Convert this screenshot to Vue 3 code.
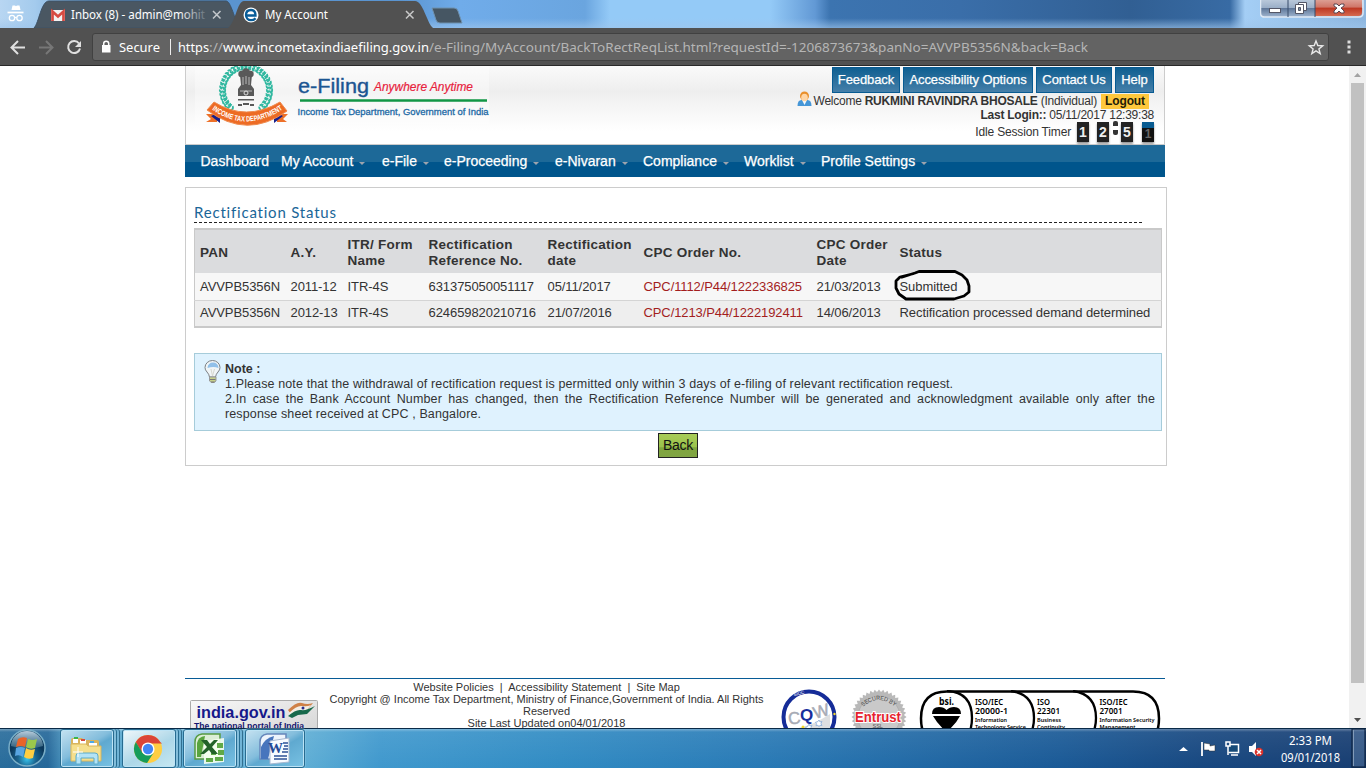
<script setup>
const headerLinks = [
  { label: 'Feedback', w: 68 },
  { label: 'Accessibility Options', w: 130 },
  { label: 'Contact Us', w: 76 },
  { label: 'Help', w: 39 },
]
const nav = [
  { label: 'Dashboard', w: 80.5 },
  { label: 'My Account', w: 101, menu: true },
  { label: 'e-File', w: 62, menu: true },
  { label: 'e-Proceeding', w: 111, menu: true },
  { label: 'e-Nivaran', w: 88, menu: true },
  { label: 'Compliance', w: 101, menu: true },
  { label: 'Worklist', w: 77, menu: true },
  { label: 'Profile Settings', w: 115, menu: true },
]
const columns = ['PAN', 'A.Y.', 'ITR/ Form Name', 'Rectification Reference No.', 'Rectification date', 'CPC Order No.', 'CPC Order Date', 'Status']
const rows = [
  ['AVVPB5356N', '2011-12', 'ITR-4S', '631375050051117', '05/11/2017', 'CPC/1112/P44/1222336825', '21/03/2013', 'Submitted'],
  ['AVVPB5356N', '2012-13', 'ITR-4S', '624659820210716', '21/07/2016', 'CPC/1213/P44/1222192411', '14/06/2013', 'Rectification processed demand determined'],
]
const wreath = Array.from({ length: 30 }, (_, i) => {
  const a = ((i * 9.5 - 228) * Math.PI) / 180
  return { x: 61 + 23.5 * Math.cos(a), y: 24 + 23.5 * Math.sin(a) }
})
const seal = Array.from({ length: 80 }, (_, i) => {
  const a = (i * Math.PI) / 40
  const r = i % 2 ? 25 : 27.5
  return `${(28 + r * Math.cos(a)).toFixed(1)},${(28 + r * Math.sin(a)).toFixed(1)}`
}).join(' ')
</script>

<template>
  <div class="screen">
    <div class="tabstrip">
      <svg class="tabs" width="480" height="28" viewBox="0 0 480 28">
        <defs>
          <linearGradient id="fade" x1="0" x2="1"><stop offset=".8" stop-color="#fff" /><stop offset="1" stop-color="#fff" stop-opacity=".15" /></linearGradient>
        </defs>
        <g fill="none" stroke="#fff" stroke-width="1.3">
          <path d="M12.500 5.500h2.500l1 .7 1-.7h2.500l1 4.500h-9z" fill="#fff" stroke="none" />
          <path d="M7.500 12.500h16" stroke-width="1.700" />
          <circle cx="12" cy="18" r="2.700" /><circle cx="19.500" cy="18" r="2.700" /><path d="M14.700 17.500h2" />
        </g>
        <path d="M34 28C39 23 41 1 49 1H226C231 1 234 19 240 28Z" fill="#4a5762" stroke="#3d5266" />
        <g>
          <rect x="51" y="10" width="14" height="11" fill="#f2f2f2" />
          <path d="M52.500 21V11.500L58 16.500l5.500-5V21" fill="none" stroke="#d64b42" stroke-width="2.700" />
        </g>
        <text class="ui" x="71" y="19" textLength="134" lengthAdjust="spacingAndGlyphs" fill="url(#fade)">Inbox (8) - admin@mohit</text>
        <path d="M213 11l7.500 7.500M220.500 11l-7.500 7.500" stroke="#c4c8cc" stroke-width="1.500" />
        <path d="M228 28C236 22 237 1 244 1H415C423 1 427 23 433 28Z" fill="#515151" />
        <g>
          <circle cx="251" cy="15" r="7.500" fill="#fff" />
          <path d="M246.500 15.500h9c0-4-2-5.500-4.500-5.500-3 0-5 2-5 5s2 5.200 5 5.200c2 0 3.500-.7 4.500-2" fill="none" stroke="#075c98" stroke-width="2.300" />
        </g>
        <text class="ui" x="265" y="19" textLength="63" lengthAdjust="spacingAndGlyphs" fill="#fff">My Account</text>
        <path d="M406 11l7.500 7.500M413.500 11l-7.500 7.500" stroke="#c9c9c9" stroke-width="1.500" />
        <path d="M432 8h22q3 0 4 3l4 12h-22q-3 0-4-3z" fill="#465663" stroke="#6f91ae" />
      </svg>
      <div class="wincontrols">
        <svg width="105" height="18" viewBox="0 0 105 18">
          <defs>
            <linearGradient id="wg" x2="0" y2="1"><stop offset="0" stop-color="#b9c8da" /><stop offset=".45" stop-color="#9bafc8" /><stop offset=".5" stop-color="#60789a" /><stop offset="1" stop-color="#9fb4cf" /></linearGradient>
            <linearGradient id="wr" x2="0" y2="1"><stop offset="0" stop-color="#dc9e93" /><stop offset=".45" stop-color="#cf7567" /><stop offset=".5" stop-color="#bd3722" /><stop offset="1" stop-color="#d56a50" /></linearGradient>
          </defs>
          <path d="M.5 0V13q0 4 4 4H99q4 0 4-4V0" fill="url(#wg)" stroke="#dfe9f5" stroke-width="1.500" />
          <path d="M55 0h47V12q0 4-4 4H55z" fill="url(#wr)" />
          <path d="M28 0v17M55 0v17" stroke="#394d6a" />
          <rect x="9.500" y="8.500" width="11" height="4" fill="#fff" stroke="#535666" />
          <path d="M38.500 2.500h8v8h-8z" fill="#fff" stroke="#535666" /><path d="M35.500 4.500h8v9h-8z" fill="#fff" stroke="#535666" /><path d="M38.500 7.500h2v3h-2z" fill="#8193a8" stroke="#535666" />
          <path d="M74 4h3l2 2 2-2h3v2l-3 2 3 3v2h-3l-2-2-2 2h-3v-2l3-3-3-2z" fill="#fff" stroke="#5a4650" />
        </svg>
      </div>
    </div>

    <div class="toolbar">
      <svg class="navicons" width="92" height="38" viewBox="0 28 92 38">
        <g fill="none" stroke-width="2">
          <path d="M25 47.500H12M18 41l-6.500 6.500L18 54" stroke="#e0e0e0" />
          <path d="M39 47.500h13M46 41l6.500 6.500L46 54" stroke="#777" />
          <path d="M79 43.500a6 6 0 1 0 1 5" stroke="#e0e0e0" /><path d="M81 41v6h-6z" fill="#e0e0e0" />
        </g>
      </svg>
      <div class="omnibox">
        <svg width="1236" height="28" viewBox="92 33 1236 28">
          <rect x="102" y="45" width="8.500" height="7.500" fill="#fff" /><path d="M103.700 46v-2.500q0-2.300 2.500-2.300t2.500 2.300V46" fill="none" stroke="#fff" stroke-width="1.500" />
          <g class="ui">
            <text x="119" y="52" fill="#fff" textLength="41" lengthAdjust="spacingAndGlyphs">Secure</text>
            <text x="178" y="52" fill="#fff" textLength="31" lengthAdjust="spacingAndGlyphs">https</text>
            <text x="209" y="52" fill="#b5b5b5" textLength="14" lengthAdjust="spacingAndGlyphs">://</text>
            <text x="223" y="52" fill="#fff" textLength="206" lengthAdjust="spacingAndGlyphs">www.incometaxindiaefiling.gov.in</text>
            <text x="429" y="52" fill="#b5b5b5" textLength="659" lengthAdjust="spacingAndGlyphs">/e-Filing/MyAccount/BackToRectReqList.html?requestId=-1206873673&amp;panNo=AVVPB5356N&amp;back=Back</text>
          </g>
          <path d="M170.500 39v16" stroke="#eee" />
          <path d="M1316 41l1.800 4.500 4.900.3-3.800 3.100 1.300 4.700-4.200-2.700-4.200 2.700 1.300-4.700-3.800-3.100 4.900-.3z" fill="none" stroke="#e8e8e8" stroke-width="1.400" />
        </svg>
      </div>
      <svg class="dots" width="6" height="16" viewBox="0 0 6 16"><path d="M1.500 1.500h3v3h-3zM1.500 6.500h3v3h-3zM1.500 11.500h3v3h-3z" fill="#ddd" /></svg>
    </div>

    <div class="viewport">
      <main class="page">
        <header class="head">
          <svg class="logo" width="310" height="62" viewBox="0 0 310 62">
            <rect x="10" width="294" height="58" fill="#fff" opacity=".35" />
            <g fill="none" stroke="#31b8a0" stroke-width="1.800">
              <circle v-for="(d, i) in wreath" :key="i" :cx="d.x" :cy="d.y" r="2.700" stroke-dasharray="4 1" />
            </g>
            <g fill="#595959">
              <circle cx="61" cy="6.500" r="4.200" /><circle cx="56.500" cy="8" r="3.200" /><circle cx="65.500" cy="8" r="3.200" />
              <path d="M55 9h12l-1 10 3 4v7H53v-7l3-4z" />
              <path d="M53 33h16v1.500H53zM53 38h4v2h-4zM58 37h6v2h-6zM65 38h4v2h-4z" />
            </g>
            <path d="M58 11v8M61 10v8M64 11v8M55 25h12" stroke="#bbb" />
            <circle cx="61" cy="27" r="2" fill="none" stroke="#ddd" />
            <path d="M21 48h11v8H21l5-3zM103 48H92v8h10l-4-3z" fill="#ed7028" />
            <path d="M26 50l9 7V46zM98 50l-9 7V46z" fill="#16208c" />
            <path d="M22 44l7-8Q61 56 95 36l7 9Q62 74 22 44z" fill="#ed6b24" stroke="#ef8a4e" />
            <path id="ribbon" d="M27 43.500Q61 68 99 42.500" fill="none" />
            <text font-size="7.500" font-weight="700" fill="#fff" class="sans"><textPath href="#ribbon" textLength="76" lengthAdjust="spacingAndGlyphs">INCOME TAX DEPARTMENT</textPath></text>
            <text class="sans" x="113" y="27" font-size="21" fill="#1b5592" stroke="#1b5592" stroke-width=".4" textLength="71" lengthAdjust="spacingAndGlyphs">e-Filing</text>
            <text class="sans" x="189" y="25" font-size="13" font-style="italic" fill="#e8213c" stroke="#e8213c" stroke-width=".2" textLength="99" lengthAdjust="spacingAndGlyphs">Anywhere Anytime</text>
            <path d="M115 34.500h187" stroke="#119645" stroke-width="2.300" />
            <text class="sans" x="112.500" y="48.500" font-size="9.700" fill="#2169a5" stroke="#2169a5" stroke-width=".3" textLength="191" lengthAdjust="spacingAndGlyphs">Income Tax Department, Government of India</text>
          </svg>
          <div class="user">
            <div class="links"><a v-for="l in headerLinks" :key="l.label" :style="{ width: l.w + 'px' }">{{ l.label }}</a></div>
            <div class="line welcome">
              <svg width="15" height="16" viewBox="0 0 15 16"><path d="M.5 15q0-6 4-6h6q4 0 4 6z" fill="#4596d7" /><path d="M5 9h5l-2.500 5z" fill="#f5f8fa" /><circle cx="7.500" cy="5" r="4.500" fill="#e98f2b" /><ellipse cx="7.500" cy="6.500" rx="3.300" ry="3.800" fill="#ffd6a6" /></svg>
              <span class="who">Welcome <b class="name">RUKMINI RAVINDRA BHOSALE</b> <span class="kind">(Individual)</span></span><b class="logout">Logout</b>
            </div>
            <div class="line login"><b>Last Login::</b>&nbsp;05/11/2017 12:39:38</div>
            <div class="line timer"><span>Idle Session Timer</span><i>1</i><i>2</i><em></em><i>5</i><i class="flip">1</i></div>
          </div>
        </header>

        <nav class="menu">
          <a v-for="n in nav" :key="n.label" :style="{ width: n.w + 'px' }">{{ n.label }}<s v-if="n.menu"></s></a>
        </nav>

        <section class="panel">
          <h1><svg width="150" height="20" viewBox="0 0 150 20"><text x="0" y="15" textLength="142" lengthAdjust="spacing">Rectification Status</text></svg></h1>
          <table>
            <colgroup><col class="c1"><col class="c2"><col class="c3"><col class="c4"><col class="c5"><col class="c6"><col class="c7"><col></colgroup>
            <thead><tr><th v-for="c in columns" :key="c">{{ c }}</th></tr></thead>
            <tbody>
              <tr v-for="(r, i) in rows" :key="i">
                <td v-for="(c, j) in r" :key="j" :class="{ order: j === 5, digits: j === 3, date: j === 1 || j === 4 || j === 6 }">
                  <span class="cell">{{ c }}<svg v-if="i === 0 && j === 7" class="ring" width="80" height="36" viewBox="0 0 80 36"><path d="M8 8.500L22 4 26 2.500H62L69 6l5 5 2 6v6l-5 4-10 3H13L6 25 3 19V12L7 8l14-3.500" fill="none" stroke="#000" stroke-width="2.800" stroke-linejoin="round" /></svg></span>
                </td>
              </tr>
            </tbody>
          </table>
          <div class="note">
            <svg width="18" height="24" viewBox="0 0 18 24"><path d="M5.500 17Q5 14 3 12Q1 10 1 7.500A7.500 7 0 0 1 16 7.500Q16 10 14 12T11.500 17z" fill="#f0f5f7" stroke="#7c8084" /><path d="M3.500 8Q4 2.500 9 2.500t5.500 5.500q-5-2-11 0z" fill="#91c0e9" /><path d="M7 9l1.500 7 2-7" stroke="#d8d8cf" fill="none" /><path d="M5.500 17h6.500v4l-2 1.500H7.500l-2-1.500z" fill="#c7d18a" stroke="#999" /><path d="M6 19.500h5.500M7 22h3.500" stroke="#777" /></svg>
            <div><b>Note :</b><p>1.Please note that the withdrawal of rectification request is permitted only within 3 days of e-filing of relevant rectification request.</p><p class="second">2.In case the Bank Account Number has changed, then the Rectification Reference Number will be generated and acknowledgment available only after the response&nbsp;sheet received at CPC , Bangalore.</p></div>
          </div>
          <button>Back</button>
        </section>

        <footer>
          <svg class="portal" width="129" height="50" viewBox="0 0 129 50">
            <defs><linearGradient id="pg" x1="0" x2="1" y2="1"><stop offset="0" stop-color="#f8f8f8" /><stop offset="1" stop-color="#cfcfcf" /></linearGradient></defs>
            <rect x=".5" y=".5" width="127" height="49" rx="1" fill="url(#pg)" stroke="#aaa" />
            <text class="sans" x="6.500" y="17.500" font-size="16" font-weight="700" fill="#16198b" textLength="89" lengthAdjust="spacingAndGlyphs">india.gov.in</text>
            <path d="M98 10Q107 1 112 3t11 0l-5 6-9 1-6 7z" fill="#cf8148" /><path d="M99 13Q107 5 112 6t9-1l-4 5-8 2-7 5z" fill="#f3eee5" /><path d="M98 16Q106 9 111 10t14-4l-8 8-9 1-6 3z" fill="#17694b" /><circle cx="113" cy="8" r="1.500" fill="#262e8e" />
            <text class="sans" x="4" y="29" font-size="9" font-weight="700" fill="#16166f" textLength="110" lengthAdjust="spacingAndGlyphs">The national portal of India</text>
          </svg>
          <div class="legal"><div class="policies">Website Policies&nbsp; |&nbsp; Accessibility Statement&nbsp; |&nbsp; Site Map</div><div>Copyright @ Income Tax Department, Ministry of Finance,Government of India. All Rights Reserved</div><div>Site Last Updated on04/01/2018</div></div>
          <svg class="badge cqw" width="56" height="56" viewBox="0 0 56 56">
            <circle cx="28" cy="28" r="25.500" fill="#fff" stroke="#152c98" stroke-width="4" />
            <path d="M10 40Q28 39 49 25v16L37 50H16z" fill="#dedfe1" />
            <g class="sans" font-size="17"><text x="7" y="35" fill="#a7abb5" stroke="#a7abb5" stroke-width=".5" transform="rotate(-8 13 29)">C</text><text x="19" y="32" fill="#182e9c" font-weight="700">Q</text><text x="32" y="28" fill="#a7abb5" stroke="#a7abb5" stroke-width=".5" transform="rotate(-16 40 22)">W</text></g>
            <text class="sans" x="13" y="5.500" font-size="4.500" fill="#fff" transform="rotate(-14 20 6)">SIOC</text>
            <path d="M28 35l1 2 2-.5-1 2 1.500 1.500-2 .3-.5 2-1.500-1.500-2 .8.5-2-1.500-1.500 2-.4zM38 31l1 2 2-.5-1 2 1 2-2-.3-1 1.500-1-1.500-2 .5.500-2-1-1.500 2-.3z" fill="#fff" stroke="#7ca3d6" stroke-width=".7" />
            <circle cx="53.500" cy="25" r="1.200" fill="#f3d829" /><circle cx="22" cy="38" r="1.500" fill="#f3d829" />
          </svg>
          <svg class="badge entrust" width="56" height="56" viewBox="0 0 56 56">
            <polygon :points="seal" fill="#b9b9b9" /><circle cx="28" cy="28" r="21" fill="#c9c9c9" stroke="#aaa" stroke-width=".7" />
            <path id="sealarc" d="M12 18Q28 4 44 18" fill="none" /><text class="sans" font-size="6" fill="#444"><textPath href="#sealarc" textLength="35" lengthAdjust="spacingAndGlyphs">SECURED BY</textPath></text>
            <text class="sans" x="4" y="32.500" font-size="14" font-weight="700" fill="#e6222e" stroke="#fff" stroke-width="2" paint-order="stroke" textLength="46" lengthAdjust="spacingAndGlyphs">Entrust</text>
            <text class="sans" x="21.500" y="38.500" font-size="5.500" fill="#555">SSL</text>
          </svg>
          <svg class="badge bsi" width="242" height="56" viewBox="0 0 242 56">
            <path d="M28 1.500H214q26 0 26 27t-26 27H28q-26 0-26-27t26-27z" fill="#fff" stroke="#000" stroke-width="2.500" />
            <path d="M28 1q25 1 25 27T28 55M92 1q23 3 23 27T92 55M154 1q23 3 23 27t-23 27" fill="none" stroke="#000" stroke-width="2.300" />
            <text class="noto" x="20" y="15" font-size="11" font-weight="700" textLength="15" lengthAdjust="spacingAndGlyphs">bsi.</text>
            <path d="M13 24q0-7 7-7 5 0 7.500 3 3-3 7.500-3 7 0 7 7zM14 26h27Q37 34 27.500 42q-9-8-13.500-16z" />
            <g class="noto" font-size="8.500" font-weight="600">
              <text x="56" y="14.500" textLength="28" lengthAdjust="spacingAndGlyphs">ISO/IEC</text><text x="56" y="24" textLength="33" lengthAdjust="spacingAndGlyphs">20000-1</text>
              <text x="118" y="14.500" textLength="13" lengthAdjust="spacingAndGlyphs">ISO</text><text x="118" y="24" textLength="23" lengthAdjust="spacingAndGlyphs">22301</text>
              <text x="180.500" y="14.500" textLength="28" lengthAdjust="spacingAndGlyphs">ISO/IEC</text><text x="180.500" y="24" textLength="23" lengthAdjust="spacingAndGlyphs">27001</text>
            </g>
            <g class="noto" font-size="6" font-weight="600">
              <text x="56" y="31.500" textLength="32" lengthAdjust="spacingAndGlyphs">Information</text><text x="56" y="38.500" textLength="51" lengthAdjust="spacingAndGlyphs">Technology Service</text>
              <text x="118" y="31.500" textLength="24" lengthAdjust="spacingAndGlyphs">Business</text><text x="118" y="38.500" textLength="28" lengthAdjust="spacingAndGlyphs">Continuity</text>
              <text x="180.500" y="31.500" textLength="55" lengthAdjust="spacingAndGlyphs">Information Security</text><text x="180.500" y="38.500" textLength="36" lengthAdjust="spacingAndGlyphs">Management</text>
            </g>
          </svg>
        </footer>
      </main>
      <div class="scrollbar"><svg width="17" height="17" viewBox="0 0 17 17"><path d="M5 11l3.500-4 3.500 4z" fill="#a3a3a3" /></svg><div class="thumb"></div><svg class="down" width="17" height="17" viewBox="0 0 17 17"><path d="M5 7l3.500 4 3.500-4z" fill="#505050" /></svg></div>
    </div>

    <div class="taskbar">
      <svg class="start" width="60" height="40" viewBox="0 0 60 40">
        <defs>
          <radialGradient id="orb" cy=".8"><stop offset="0" stop-color="#38c4ed" /><stop offset=".5" stop-color="#1b648f" /><stop offset="1" stop-color="#0b385b" /></radialGradient>
          <linearGradient id="gloss" x2="0" y2="1"><stop offset="0" stop-color="#b8cddc" /><stop offset="1" stop-color="#42748f" stop-opacity=".7" /></linearGradient>
        </defs>
        <circle cx="27" cy="20" r="18" fill="url(#orb)" stroke="#7aafc8" stroke-width="1.500" /><path d="M11 18a16 15 0 0 1 32 0q-16 5-32 0z" fill="url(#gloss)" />
        <path d="M18 11q4-3 9-1l-2 9q-4-2-9 0z" fill="#e96429" /><path d="M28 11q5 2 9 0l-2 9q-5 2-9-1z" fill="#9bc84b" /><path d="M16 20q5-2 9 0l-2 9q-4-3-8-1z" fill="#58a5e2" /><path d="M26 20q4 3 9 1l-2 9q-5 2-9-1z" fill="#ffce42" />
      </svg>
      <div class="task stack"><svg width="34" height="34" viewBox="0 0 34 34">
        <path d="M2 8q0-2 2-2h9l2 2h13q2 0 2 2v17H2z" fill="#d9b35c" /><path d="M4 7h5v4H4zM11 8h6v4h-6zM20 11h8v4h-8z" fill="#fff" /><path d="M5 5h4v2H5z" fill="#3ab44a" /><path d="M12 7h4v2h-4z" fill="#d84c3d" /><path d="M21 9h4v2h-4z" fill="#4aa8e7" />
        <path d="M2 12h15l2 2h13v15H2z" fill="#f5df8d" stroke="#d8b65f" /><path d="M7 32V24q0-3 3-3h16q3 0 3 3v8h-4v-6H12v6z" fill="#b3e3f6" stroke="#5cabc8" /><path d="M9 15v10M4 20h10" stroke="#fff" />
      </svg></div>
      <div class="task active stack"><svg width="30" height="30" viewBox="0 0 32 32">
        <circle cx="16" cy="16" r="15" fill="#ffce43" /><path d="M3 8.500A15 15 0 0 1 29 8.500L31 10H16L9.500 20z" fill="#db4437" /><path d="M3 8.500A15 15 0 0 0 15 31l7-11q-6 5-12 0z" fill="#159c5a" /><circle cx="16" cy="16" r="7" fill="#fff" /><circle cx="16" cy="16" r="5.500" fill="#4285f4" />
      </svg></div>
      <div class="task stack"><svg width="34" height="34" viewBox="0 0 34 34"><path d="M3 27V10Q3 3 10 2h18v25z" fill="#dceed6" stroke="#579b43" stroke-width="1.500" /><path d="M5 25V11q1-6 8-7L9 25z" fill="#58a43e" /><path d="M12 9l20-3v24l-20 2z" fill="#f6fff1" opacity=".9" /><path d="M25 11h6v5h-6zM19 19h5v4h-5zM26 18h6v5h-6zM14 26h7v4h-7zM23 25h8v4h-8z" fill="#60a948" /><path d="M9 8h6l3 4 4-4h4l-6 7 6 7h-6l-3-4-5 4H8l7-7z" fill="#236229" /></svg></div>
      <div class="task last"><svg width="34" height="34" viewBox="0 0 34 34"><path d="M3 27V10Q3 3 10 2h19v25z" fill="#edf4fc" stroke="#6687bb" stroke-width="1.500" /><path d="M4 27V15Q8 6 17 4l-6 23z" fill="#4775bd" /><path d="M13 9l19-3v24l-19 2z" fill="#f8fbff" stroke="#a7b8d0" /><path d="M26 11h5M27 14h4M26 17h5M25 20h6M17 24h13M17 27h13" stroke="#2d5296" stroke-width="1.500" /><text x="11" y="21" class="serif" font-size="15" font-weight="700" fill="#254a96">W</text></svg></div>
      <svg class="tray" width="206" height="40" viewBox="1160 728 206 40">
        <path d="M1179 751l4.500-4 4.500 4z" fill="#fff" />
        <path d="M1202 742v14" stroke="#fff" stroke-width="1.800" /><path d="M1204 743l6 1v2l5-1v6h-6v-1h-5z" fill="#fff" stroke="#333" stroke-width=".5" />
        <path d="M1229.500 744.500h9v8h-10" fill="#164a78" stroke="#fff" stroke-width="1.500" /><path d="M1226 742h4v4h-4zM1228 746v9M1231 755h7" fill="none" stroke="#fff" stroke-width="1.500" />
        <path d="M1249 746h3l4-4v14l-4-4h-3z" fill="#fff" /><circle cx="1259" cy="752" r="4.300" fill="#dc3029" /><path d="M1257 750l4 4M1261 750l-4 4" stroke="#fff" stroke-width="1.500" />
        <g class="ui" fill="#fff" font-size="12"><text x="1289" y="745" textLength="43" lengthAdjust="spacingAndGlyphs">2:33 PM</text><text x="1281" y="762" textLength="59" lengthAdjust="spacingAndGlyphs">09/01/2018</text></g>
        <rect x="1352" y="729" width="13" height="38" fill="#7593b5" fill-opacity=".35" stroke="#071b36" /><path d="M1353.500 730v36" stroke="#829bb8" />
      </svg>
    </div>
  </div>
</template>

<style>
body { margin: 0; overflow: hidden; }
</style>
<style scoped>
* { box-sizing: border-box; }
.screen { width: 1366px; height: 768px; display: flex; flex-direction: column; overflow: hidden; font-family: "Liberation Sans", Arial, sans-serif; color: #333; background: #fff; }
.ui { font-family: "Noto Sans", "Open Sans", sans-serif; font-size: 12px; }
.sans { font-family: "Liberation Sans", Arial, sans-serif; }
.noto { font-family: "Noto Sans", sans-serif; }
.serif { font-family: "Liberation Serif", serif; }
svg { display: block; flex: none; }
.tabstrip { height: 28px; flex: none; display: flex; justify-content: space-between; background: linear-gradient(180deg, transparent 65%, rgba(158,197,235,.65)), linear-gradient(90deg, #b8d6f2 0, #a4cbed 35px, #5a94d0 100px, #5a94d0 400px, #70acea 460px, #6aa5df 585px, #94caf7 610px, #94caf7 770px, #6299d5 815px, #3c74b0 830px, #3a6ea9 960px, #315f93 1130px, #386ba4 1230px, #a4cef5 1245px, #8cb5de 1366px); }
.wincontrols { padding-right: 1px; }
.toolbar { height: 38px; flex: none; display: flex; align-items: flex-start; background: #515151; border-bottom: 1px solid #292929; }
.omnibox { width: 1237px; height: 28px; margin-top: 5px; border: 1px solid #414141; border-radius: 3px; background: #636363; overflow: hidden; }
.omnibox svg { margin: -1px; }
.dots { margin: 11px 0 0 17px; }
.viewport { height: 662px; flex: none; display: flex; justify-content: space-between; overflow: hidden; }
.page { margin-left: 185px; width: 982px; display: flex; flex-direction: column; }
.head { width: 980px; height: 79px; flex: none; display: flex; justify-content: space-between; border-left: 1px solid #ccc; border-right: 1px solid #ccc; border-bottom: 1px solid #ccc; background: linear-gradient(#fafafa 0, #eee 25px, #f2f2f2 33px, #fff 65px); }
.logo { margin-left: -1px; }
.user { width: 370px; padding: 1px 10px 0 0; display: flex; flex-direction: column; align-items: flex-end; font-size: 12px; }
.links { display: flex; gap: 3px; }
.links a { height: 26px; border: 1px solid #085b92; background: linear-gradient(#0f5f91, #457fa9); color: #fff; font-size: 13px; line-height: 24px; text-align: center; white-space: nowrap; -webkit-text-stroke: .25px #fff; letter-spacing: -.1px; }
.line { display: flex; align-items: center; height: 14px; white-space: nowrap; }
.welcome { margin-top: 1px; padding-right: 5px; }
.welcome svg { margin: -5px 2px 0 0; }
.who { letter-spacing: -.25px; }
.name { letter-spacing: -.24px; }
.kind { letter-spacing: -.2px; }
.logout { margin-left: 4px; padding: 0 4px; background: #ffc83c; color: #221c08; line-height: 15px; letter-spacing: -.1px; }
.login { letter-spacing: -.24px; }
.timer { height: 21px; margin-top: -1px; }
.timer span { margin-right: 7px; letter-spacing: -.17px; }
.timer i { position: relative; left: -1px; width: 12px; height: 20px; margin-right: 8px; background: #222; color: #eee; font: bold 14px/20px "Liberation Sans", Arial, sans-serif; text-align: center; box-shadow: 0 2px 2px #999; }
.timer em { width: 5px; height: 14px; margin: -7px 4px 0 -5px; border-top: 5px solid #333; border-bottom: 5px solid #333; border-radius: 2px; }
.timer i.flip { left: 0; margin-right: 0; background: linear-gradient(#085b91 0 6px, #111 6px); color: #666; font-size: 12px; line-height: 24px; }
.menu { width: 980px; height: 32px; flex: none; padding-left: 15.500px; display: flex; background: linear-gradient(#1d6998 0 17px, #00558c 17px); }
.menu a { flex: none; display: flex; align-items: center; color: #fff; font-size: 14px; line-height: 32px; white-space: nowrap; -webkit-text-stroke: .25px #fff; }
.menu s { width: 0; height: 0; margin: 5px 0 0 6px; border: 3px solid transparent; border-top-color: #9ca3ad; border-bottom: 0; }
.panel { height: 279px; flex: none; margin-top: 10px; padding: 15px 4px 0 8px; border: 1px solid #ccc; display: flex; flex-direction: column; align-items: flex-start; }
h1 { width: 948px; height: 20px; margin: 0; border-bottom: 1px dashed #222; font-weight: 400; }
h1 text { font: 400 15px "Lato", sans-serif; font-variant-ligatures: none; fill: #1a6698; }
table { width: 968px; height: 100px; margin-top: 5px; table-layout: fixed; border-collapse: collapse; border: 1px solid #c9c9c9; border-top-width: 2px; border-bottom-width: 2px; font-size: 13px; text-align: left; }
.c1 { width: 91px; } .c2 { width: 57px; } .c3 { width: 81px; } .c4 { width: 119px; } .c5 { width: 96px; } .c6 { width: 173px; } .c7 { width: 83px; }
th { height: 44px; padding: 2px 0 0 5px; background: #dbdcde; font-size: 13.500px; line-height: 16px; letter-spacing: .25px; }
th:nth-child(3) { padding-right: 10px; }
td { height: 27px; padding: 0 0 0 5px; background: #f7f7f7; line-height: 16px; white-space: nowrap; border-bottom: 1px solid #d4d4d4; letter-spacing: -.07px; }
tr:nth-child(1) td { padding-top: 1px; }
tr:nth-child(2) td { background: #eee; border-top: 1px solid #d4d4d4; border-bottom: 2px solid #c9c9c9; }
td.digits { letter-spacing: -.07px; }
td.date { letter-spacing: -.09px; }
td.order { color: #a31e1e; letter-spacing: -.1px; }
.cell { position: relative; }
.ring { position: absolute; left: -7px; top: -9.500px; }
.note { width: 968px; height: 78px; margin-top: 25px; padding: 6px 6px 0 9px; border: 1px solid #a6ccda; background: #dff2fe; display: flex; gap: 3px; font-size: 12.500px; line-height: 15px; }
.note > div { flex: 1; padding-top: 2px; text-align: justify; }
.note p { margin: 0; letter-spacing: .122px; }
button { align-self: center; width: 40px; height: 25px; margin: 2px 0 0 0; padding: 0 0 2px; border: 1px solid #222; background: linear-gradient(#a8cc58 0, #9bc24c 55%, #7fa53e 60%, #80a443); color: #111; font: 14px "Liberation Sans", Arial, sans-serif; letter-spacing: -.25px; }
footer { position: relative; width: 980px; margin-top: 212px; height: 70px; border-top: 1px solid #075b96; display: flex; }
.portal { margin: 21px 0 0 5px; }
.legal { width: 444px; margin: 2px 0 0 5.500px; font-size: 11px; line-height: 12px; text-align: center; }
.cqw { margin: 10px 0 0 12.500px; }
.entrust { margin: 10px 0 0 14px; }
.bsi { margin: 11px 0 0 12px; }
.scrollbar { width: 17px; height: 662px; background: #f1f1f1; display: flex; flex-direction: column; align-items: center; }
.thumb { width: 13px; height: 600px; background: #c1c1c1; }
.down { margin-top: auto; }
.taskbar { height: 40px; flex: none; display: flex; border-top: 1px solid #0a2a47; background: linear-gradient(rgba(255,255,255,.35) 0, rgba(255,255,255,.08) 3px, transparent 40px), linear-gradient(90deg, #286c9b 0, #246799 48px, #59a7ce 72px, #60afd5 300px, #3f98cd 380px, #308bc3 560px, #2879b5 760px, #195996 1060px, #164780 1200px, #163c70 1366px); }
.start, .tray { margin-top: -1px; }
.task { width: 54px; height: 39px; margin-right: 7.500px; border: 1px solid #276b90; border-radius: 3px; box-shadow: inset 0 0 0 1px #bce3f5, 0 0 0 1px rgba(155,209,235,.35); background: linear-gradient(150deg, #c5e2f1 0, #83bddc 45%, #5fa9d0 55%, #79c2e3); display: flex; justify-content: center; align-items: center; padding-right: 2px; }
.stack { box-shadow: inset 0 0 0 1px #bce3f5, 2px 0 0 #83bedb, 3px 0 0 #286e92, 5px 0 0 #71b4d6, 6px 0 0 #316f90; }
.active { background: linear-gradient(150deg, #f1f8fb, #add7e8 55%, #c6e8f2); }
.last { width: 60px; }
.tray { margin-left: auto; }
</style>
